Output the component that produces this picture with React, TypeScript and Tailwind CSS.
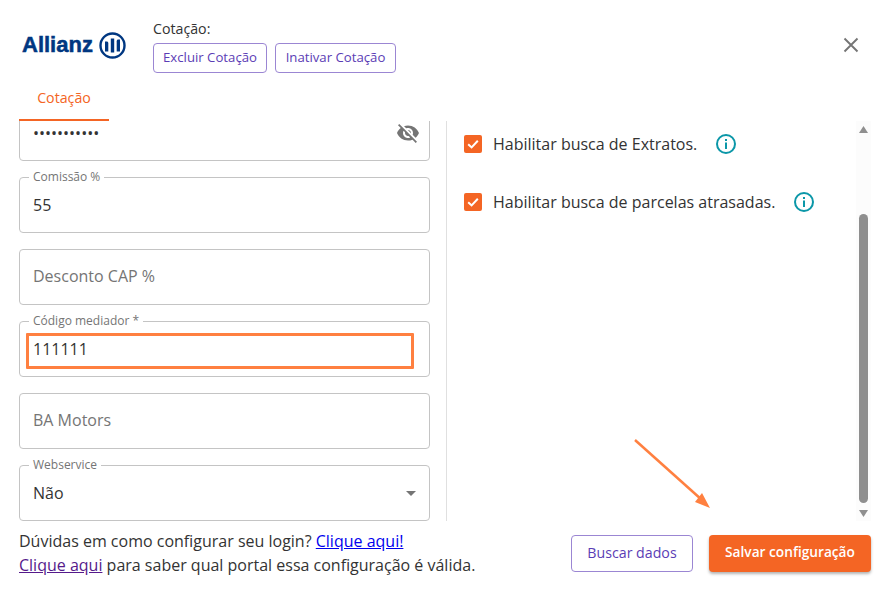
import React from "react";

function Logo() {
  return (
    <div className="flex items-center gap-[6px] w-[132px] pl-[3px]">
      <span className="font-['Liberation_Sans',sans-serif] font-bold text-[22px] leading-none text-[#003781] [-webkit-text-stroke:0.5px_#003781]">Allianz</span>
      <svg width="27" height="27" viewBox="0 0 27 27" fill="none">
        <circle cx="13.5" cy="13.5" r="12" stroke="#003781" strokeWidth="2.4" />
        <rect x="11.8" y="6.5" width="3.4" height="14" fill="#003781" />
        <path d="M6 9.5h1.5c1.2 0 1.8.6 1.8 1.8v8.2H6z" fill="#003781" />
        <path d="M21 7.5h-1.5c-1.2 0-1.8.6-1.8 1.8v10.2H21z" fill="#003781" />
      </svg>
    </div>
  );
}

function Field({ label, children, right }: { label?: string; children: React.ReactNode; right?: React.ReactNode }) {
  return (
    <div className="relative h-[56px] border border-[#c4c4c4] rounded-[4px] flex items-center justify-between pl-[13px] pr-[12px] shrink-0 bg-white">
      {label && (
        <span className="absolute left-[9px] top-[-8px] bg-white px-[4px] text-[12px] leading-[14px] text-[#757575]">{label}</span>
      )}
      {children}
      {right}
    </div>
  );
}

function Info() {
  return (
    <svg width="22" height="22" viewBox="0 0 22 22" fill="none">
      <circle cx="11" cy="11" r="9" stroke="#0b97a8" strokeWidth="2" />
      <rect x="10" y="9.5" width="2" height="6.5" fill="#0b97a8" />
      <rect x="10" y="6" width="2" height="2" fill="#0b97a8" />
    </svg>
  );
}

function Check({ label }: { label: string }) {
  return (
    <div className="flex items-center h-[22px]">
      <span className="w-[18px] h-[18px] rounded-[2px] bg-[#f46524] flex items-center justify-center">
        <svg width="14" height="14" viewBox="0 0 14 14" fill="none">
          <path d="M2.2 7.2 5.6 10.4 11.8 3.8" stroke="#fff" strokeWidth="2" />
        </svg>
      </span>
      <span className="ml-[11px] text-[16px] text-[#333] leading-[22px]">{label}</span>
      <span className="ml-[18px] flex"><Info /></span>
    </div>
  );
}

export default function App() {
  return (
    <div className="relative w-[887px] h-[590px] bg-white overflow-hidden font-['Open_Sans','Noto_Sans',sans-serif] text-[#333]">
      <header className="flex h-[80px] pl-[19px] pr-[28px]">
        <div className="flex items-center pt-[10px]"><Logo /></div>
        <div className="ml-[2px] pt-[19px]">
          <div className="text-[14.2px] leading-[19px]">Cotação:</div>
          <div className="flex gap-[8px] mt-[5px]">
            <button className="h-[30px] w-[114px] border border-[#9b86d3] rounded-[4px] text-[13.2px] text-[#5b3db5]">Excluir Cotação</button>
            <button className="h-[30px] w-[121px] border border-[#9b86d3] rounded-[4px] text-[13.2px] text-[#5b3db5]">Inativar Cotação</button>
          </div>
        </div>
        <button className="ml-auto self-start mt-[37px] text-[#757575]">
          <svg width="16" height="16" viewBox="0 0 16 16" fill="none">
            <path d="M1.5 1.5 14.5 14.5M14.5 1.5 1.5 14.5" stroke="#757575" strokeWidth="1.9" />
          </svg>
        </button>
      </header>

      <div className="pl-[19px] h-[41px]">
        <div className="w-[90px] h-[41px] border-b-2 border-[#f46524] text-[#f46524] text-[14.2px] flex items-start justify-center pt-[7px]">Cotação</div>
      </div>

      <main className="flex h-[400px] pl-[19px] pr-[16px]">
        <section className="w-[411px] h-[400px] overflow-hidden shrink-0">
          <div className="flex flex-col gap-[16px] mt-[-16px]">
            <Field
              right={
                <svg width="24" height="24" viewBox="0 0 24 24" fill="#757575" className="mr-[-3px] mt-[-1px]">
                  <path d="M12 7c2.76 0 5 2.24 5 5 0 .65-.13 1.26-.36 1.83l2.92 2.92c1.51-1.26 2.7-2.89 3.43-4.75-1.73-4.39-6-7.5-11-7.5-1.4 0-2.74.25-3.98.7l2.16 2.16C10.74 7.13 11.35 7 12 7zM2 4.27l2.28 2.28.46.46C3.08 8.3 1.78 10.02 1 12c1.73 4.39 6 7.5 11 7.5 1.55 0 3.03-.3 4.38-.84l.42.42L19.73 22 21 20.73 3.27 3 2 4.27zM7.53 9.8l1.55 1.55c-.05.21-.08.43-.08.65 0 1.66 1.34 3 3 3 .22 0 .44-.03.65-.08l1.55 1.55c-.67.33-1.41.53-2.2.53-2.76 0-5-2.24-5-5 0-.79.2-1.53.53-2.2zm4.31-.78 3.15 3.15.02-.16c0-1.66-1.34-3-3-3l-.17.01z" />
                </svg>
              }
            >
              <span className="text-[16px] text-[#333] mb-[1px] leading-none">•••••••••••</span>
            </Field>
            <Field label="Comissão %"><span className="text-[16px]">55</span></Field>
            <Field><span className="text-[16px] text-[#757575] mb-[2px]">Desconto CAP %</span></Field>
            <Field label="Código mediador *"><span className="text-[16px]">111111</span></Field>
            <Field><span className="text-[16px] text-[#757575] mb-[2px]">BA Motors</span></Field>
            <Field
              label="Webservice"
              right={
                <svg width="10" height="5" viewBox="0 0 10 5" className="mr-[1px]"><path d="M0 0h10L5 5z" fill="#757575" /></svg>
              }
            >
              <span className="text-[16px]">Não</span>
            </Field>
          </div>
        </section>

        <div className="ml-[16px] w-px bg-[#e0e0e0] shrink-0" />

        <section className="flex-1 flex flex-col gap-[36px] pl-[17px] pt-[12px]">
          <Check label="Habilitar busca de Extratos." />
          <Check label="Habilitar busca de parcelas atrasadas." />
        </section>

        <div className="w-[15px] shrink-0 bg-[#fcfcfc] flex flex-col items-center pt-[5px]">
          <svg width="9" height="7" viewBox="0 0 9 7"><path d="M4.5 0 9 7H0z" fill="#8f8f8f" /></svg>
          <div className="w-[9px] h-[289px] mt-[81px] rounded-full bg-[#8f8f8f]" />
          <svg width="9" height="7" viewBox="0 0 9 7" className="mt-[7px]"><path d="M0 0h9L4.500 7z" fill="#8f8f8f" /></svg>
        </div>
      </main>

      <footer className="flex items-start justify-between pl-[19px] pr-[16px] mt-[8px]">
        <div className="text-[16px] leading-[24px] text-[#333]">
          <div>Dúvidas em como configurar seu login? <a className="text-[#0000ee] underline">Clique aqui!</a></div>
          <div><a className="text-[#551a8b] underline">Clique aqui</a> para saber qual portal essa configuração é válida.</div>
        </div>
        <div className="flex gap-[16px] mt-[6px]">
          <button className="w-[122px] h-[37px] border border-[#9b86d3] rounded-[4px] text-[14.2px] text-[#5b3db5] pb-[2px]">Buscar dados</button>
          <button className="w-[162px] h-[37px] rounded-[4px] bg-[#f46524] text-white text-[13.7px] font-semibold shadow-[0_2px_3px_rgba(0,0,0,0.3)] pb-[2px]">Salvar configuração</button>
        </div>
      </footer>

      <div className="absolute left-[26px] top-[333px] w-[388px] h-[36px] border-[3px] border-[#ff8040] rounded-[1px]" />
      <svg className="absolute left-[630px] top-[435px]" width="85" height="75" viewBox="0 0 85 75" fill="none">
        <path d="M5 5 72 65" stroke="#ff8040" strokeWidth="2.500" />
        <path d="M80 73 65 67 72 58z" fill="#ff8040" />
      </svg>
    </div>
  );
}
